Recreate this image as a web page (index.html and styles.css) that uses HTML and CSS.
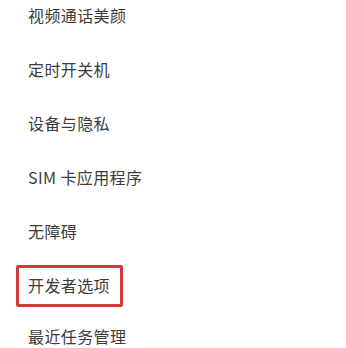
FILE: index.html
```html
<!DOCTYPE html>
<html lang="zh">
<head>
<meta charset="utf-8">
<link rel="stylesheet" href="styles.css">
</head>
<body>
<ul class="list">
  <li class="row"><span class="label">视频通话美颜</span><span class="chev"></span></li>
  <li class="row"><span class="label">定时开关机</span><span class="chev"></span></li>
  <li class="row"><span class="label">设备与隐私</span><span class="chev"></span></li>
  <li class="row"><span class="label">SIM 卡应用程序</span><span class="chev"></span></li>
  <li class="row"><span class="label">无障碍</span><span class="chev"></span></li>
  <li class="row"><span class="label highlight">开发者选项</span><span class="chev"></span></li>
  <li class="row last"><span class="label">最近任务管理</span><span class="chev"></span></li>
</ul>
</body>
</html>
```
FILE: styles.css
```css
html, body {
  margin: 0;
  padding: 0;
  background: #ffffff;
  overflow: hidden;
}
.list {
  list-style: none;
  margin: -12px 0 0 0;
  padding: 0;
  width: 346px;
}
.row {
  height: 54px;
  display: flex;
  align-items: center;
  padding-left: 28px;
  font-family: "Noto Sans CJK SC", "Noto Sans", sans-serif;
  font-size: 16px;
  letter-spacing: 0.4px;
  color: #3c3c3c;
}
.row.last {
  height: 36px;
  align-items: flex-end;
  padding-bottom: 0;
  box-sizing: border-box;
}
.label {
  position: relative;
}
.highlight::after {
  content: "";
  position: absolute;
  left: -12px;
  top: -8px;
  width: 101px;
  height: 36px;
  border: 3px solid #d2393c;
  border-radius: 2px;
}
.chev {
  margin-left: auto;
  margin-right: -8px;
  width: 9px;
  height: 9px;
  border-top: 1.5px solid #c8c8c8;
  border-right: 1.5px solid #c8c8c8;
  transform: rotate(45deg);
  position: relative;
  top: -3px;
}
.row.last .chev {
  top: -6px;
}
```
